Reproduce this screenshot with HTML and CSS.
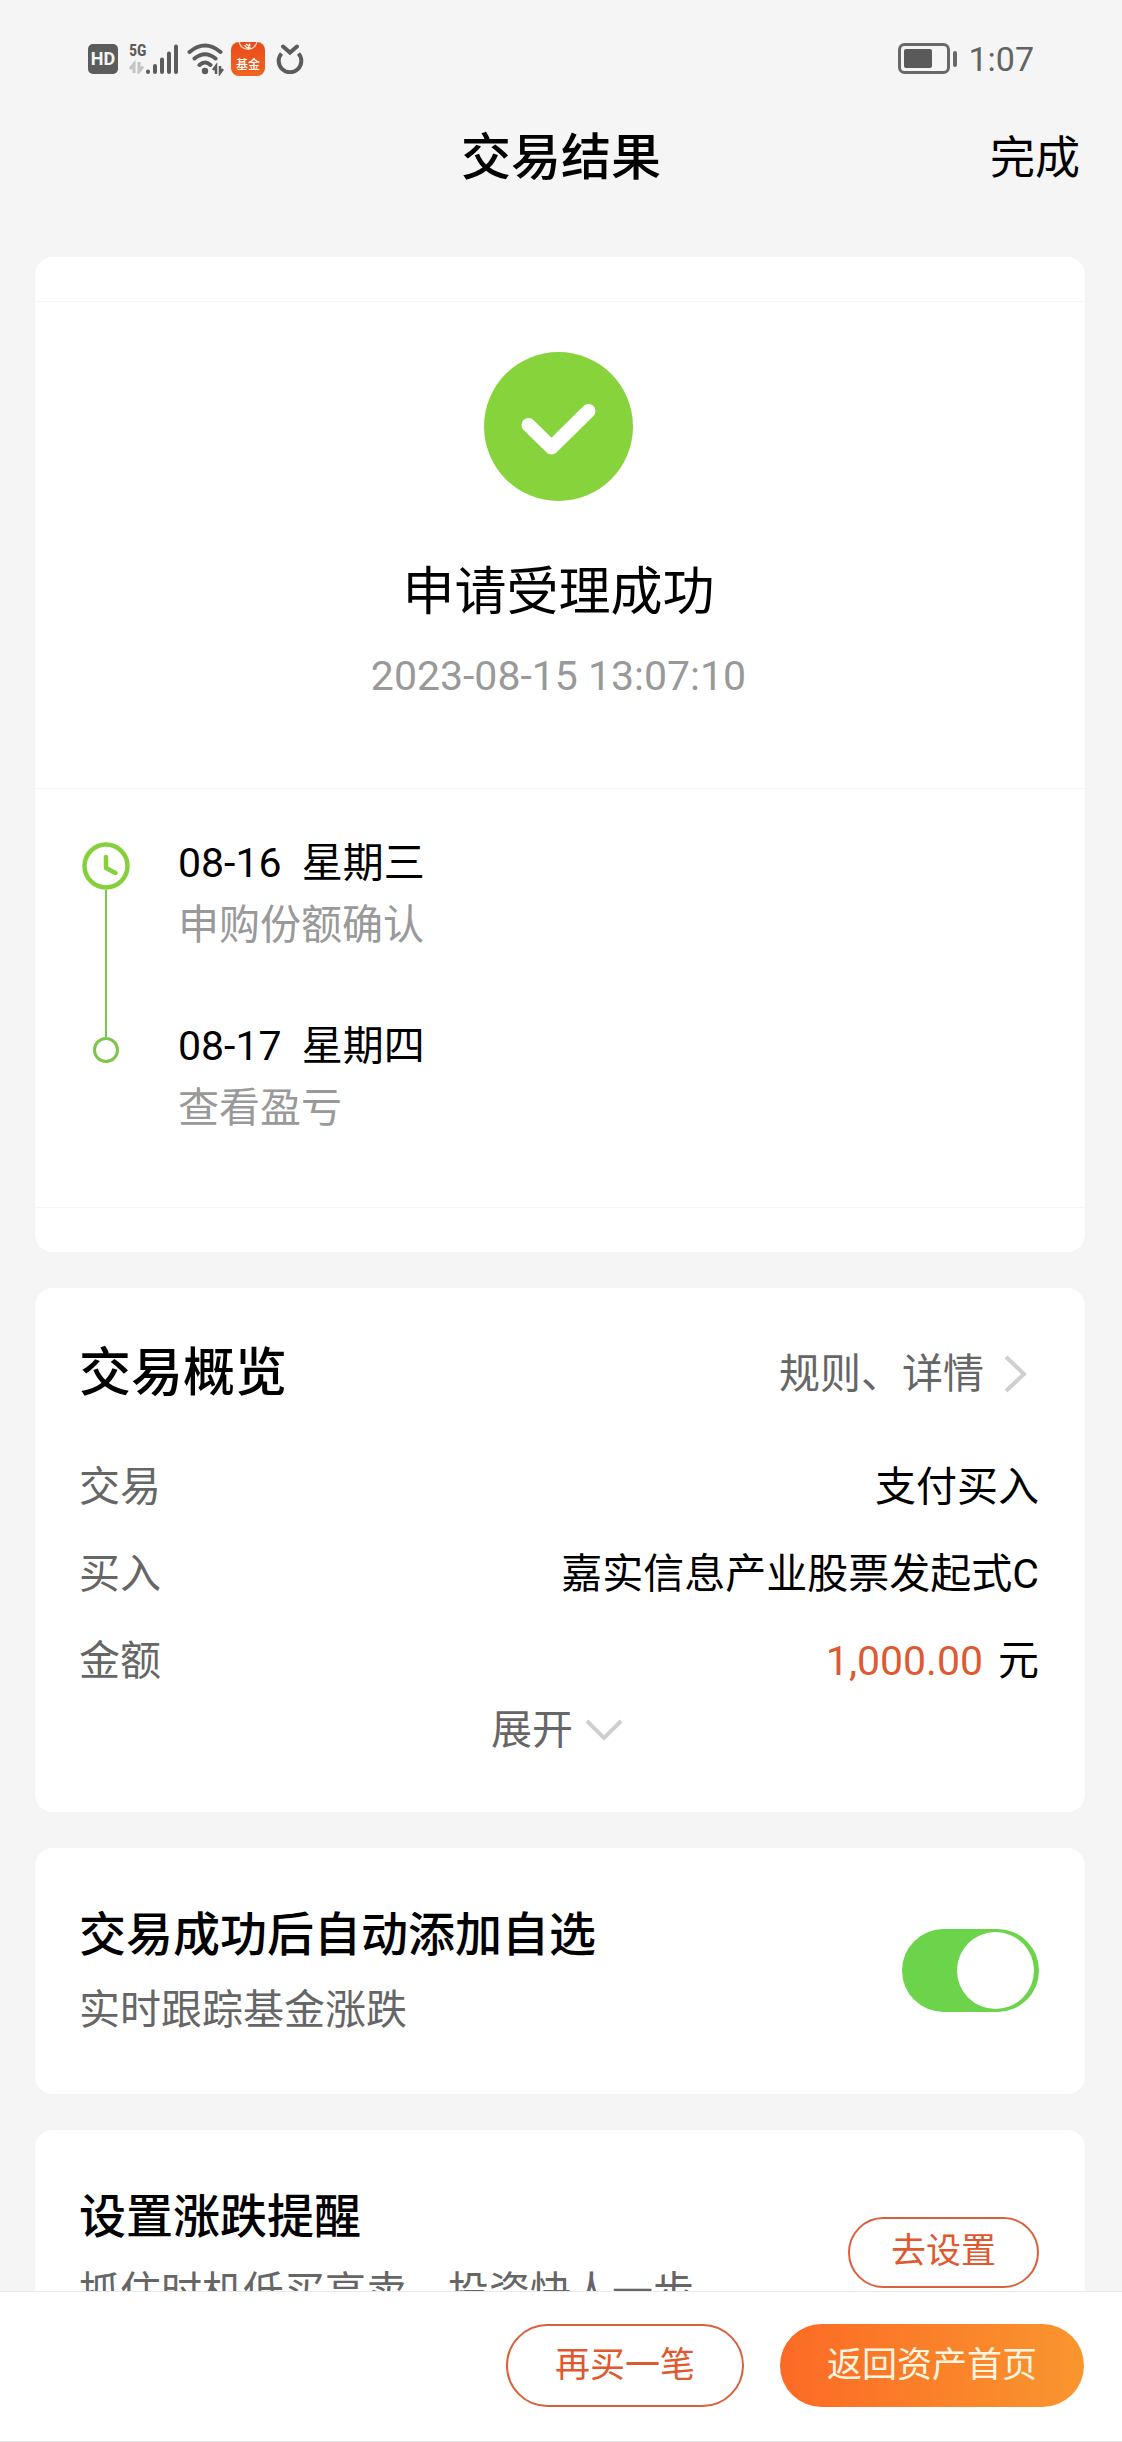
FILE: index.html
```html
<!DOCTYPE html>
<html lang="zh-CN">
<head>
<meta charset="utf-8">
<meta name="viewport" content="width=device-width, initial-scale=1">
<title>交易结果</title>
<link rel="stylesheet" href="styles.css">
</head>
<body>
<div class="app">
  <div class="status">
    <div class="status-left">
      <span class="hd">HD</span>
      <span class="network">
        <span class="network-type">5G</span>
        <svg width="16" height="14" viewBox="0 0 16 14" aria-hidden="true"><path d="M5 13V4L1 9M10 2v9.500l4-5" fill="none" stroke="#c4c4c4" stroke-width="3"/></svg>
      </span>
      <svg class="ic-signal" width="34" height="34" viewBox="16 0 34 34" aria-hidden="true">
        <g stroke="#5c5c5c" stroke-width="4" stroke-linecap="round"><path d="M19 29.500v0.500M26 24v6M33 17.500V30M40 11.500V30M47 4.500V30"/></g>
      </svg>
      <svg class="ic-wifi" width="38" height="34" viewBox="0 0 38 34" role="img" aria-label="Wi-Fi">
        <g fill="none" stroke="#5c5c5c" stroke-width="4" stroke-linecap="round"><path d="M2.500 10Q18 -3 33.500 10M7.500 16.500Q18 8 28.500 16.500M12.500 23Q18 18 23.500 23"/></g>
        <circle cx="18" cy="29" r="3.200" fill="#5c5c5c"/><path d="M29 32v-8l-3 4M33 24v7l3-4" fill="none" stroke="#5c5c5c" stroke-width="2.500"/>
      </svg>
      <span class="fund"><svg width="34" height="14" viewBox="0 0 34 14" aria-hidden="true"><path d="M8 0a9.500 10.500 0 0 0 18 0" fill="none" stroke="#ffd9c4" stroke-width="1.200"/><path d="M13.500 3q2 4 6.500 3M15 2q2 2 4.500 1.500M17 7.500l2-6" fill="none" stroke="#fff" stroke-width="1.200"/></svg>基金</span>
      <svg class="ic-ring" width="28" height="30" viewBox="0 0 28 30" aria-hidden="true"><path d="M5.500 9.500a11.300 11.300 0 1 0 17 0" fill="none" stroke="#5c5c5c" stroke-width="4"/><path d="M7 2.500l7 6 7-6" fill="none" stroke="#5c5c5c" stroke-width="4" stroke-linecap="round"/></svg>
    </div>
    <div class="status-right">
      <svg width="60" height="32" viewBox="0 0 60 32" role="img" aria-label="电量"><rect x="1.500" y="1.500" width="49" height="28" rx="5" fill="none" stroke="#686868" stroke-width="3"/><rect x="6" y="6" width="28" height="19" rx="2" fill="#5a5a5a"/><rect x="55" y="8" width="4" height="16" rx="2" fill="#686868"/></svg>
      <span>1:07</span>
    </div>
  </div>

  <header class="nav">
    <h1>交易结果</h1>
    <button type="button" class="done">完成</button>
  </header>

  <main class="content">
    <section class="card result">
      <div class="summary">
        <svg width="149" height="149" viewBox="0 0 149 149" aria-hidden="true"><circle cx="74.500" cy="74.500" r="74.500" fill="#87d33c"/><path d="M44.500 73L67.500 95.500L104.500 59" fill="none" stroke="#fff" stroke-width="14" stroke-linecap="round" stroke-linejoin="round"/></svg>
        <h2>申请受理成功</h2>
        <time datetime="2023-08-15T13:07:10">2023-08-15 13:07:10</time>
      </div>
      <ol class="steps">
        <li class="step">
          <span class="marker marker-clock"><svg width="48" height="48" viewBox="0 0 48 48" aria-hidden="true"><circle cx="24" cy="24" r="21.500" fill="none" stroke="#86d03c" stroke-width="4.500"/><path d="M24 15v11l9.500 5" fill="none" stroke="#86d03c" stroke-width="4.500" stroke-linecap="round" stroke-linejoin="round"/></svg></span>
          <div><p class="step-date">08-16&nbsp; 星期三</p><p class="step-note">申购份额确认</p></div>
        </li>
        <li class="step">
          <span class="marker marker-dot"></span>
          <div><p class="step-date">08-17&nbsp; 星期四</p><p class="step-note">查看盈亏</p></div>
        </li>
      </ol>
    </section>

    <section class="card overview">
      <div class="overview-head">
        <h2>交易概览</h2>
        <a href="#rules">规则、详情<svg width="24" height="38" viewBox="0 0 24 38" aria-hidden="true"><path d="M2 2l18 17L2 36" fill="none" stroke="#cfcfcf" stroke-width="4"/></svg></a>
      </div>
      <dl>
        <div class="row"><dt>交易</dt><dd>支付买入</dd></div>
        <div class="row"><dt>买入</dt><dd>嘉实信息产业股票发起式C</dd></div>
        <div class="row"><dt>金额</dt><dd><span class="amount">1,000.00</span>元</dd></div>
      </dl>
      <button type="button" class="expand">展开<svg width="38" height="22" viewBox="0 0 38 22" aria-hidden="true"><path d="M2 2l17 17L36 2" fill="none" stroke="#cfcfcf" stroke-width="4"/></svg></button>
    </section>

    <section class="card option">
      <label for="auto-add"><strong>交易成功后自动添加自选</strong><span>实时跟踪基金涨跌</span></label>
      <input type="checkbox" role="switch" id="auto-add" class="switch" checked>
    </section>

    <section class="card option">
      <div class="option-text"><strong>设置涨跌提醒</strong><span>抓住时机低买高卖，投资快人一步</span></div>
      <button type="button" class="pill pill-small">去设置</button>
    </section>
  </main>

  <footer class="actions">
    <button type="button" class="pill">再买一笔</button>
    <button type="button" class="pill pill-primary">返回资产首页</button>
  </footer>
</div>
</body>
</html>
```
FILE: styles.css
```css
*,
*::before,
*::after {
  box-sizing: border-box;
  margin: 0;
  padding: 0;
}

body {
  background: #f5f5f5;
  color: #000;
  font-family: Roboto, "Noto Sans CJK SC", sans-serif;
  font-size: 41px;
}

button {
  border: 0;
  background: none;
  font: inherit;
  color: inherit;
  cursor: pointer;
}

svg {
  display: block;
  flex: none;
}

.app {
  display: flex;
  flex-direction: column;
  height: 100vh;
}

/* Status bar */
.status {
  display: flex;
  flex: none;
  justify-content: space-between;
  align-items: center;
  height: 118px;
  padding: 0 88px;
  color: #636363;
}

.status-left {
  display: flex;
  align-items: center;
}

.hd {
  width: 30px;
  height: 30px;
  border-radius: 5px;
  background: #5c5c5c;
  color: #f5f5f5;
  font-size: 18px;
  font-weight: 700;
  line-height: 30px;
  text-align: center;
}

.network {
  display: flex;
  flex-direction: column;
  width: 16px;
  height: 34px;
  margin-left: 11px;
}

.network-type {
  color: #5c5c5c;
  font-family: "Roboto Condensed", Roboto, sans-serif;
  font-size: 16px;
  font-weight: 700;
  line-height: 18px;
  white-space: nowrap;
}

.ic-wifi {
  margin-left: 8px;
}

.fund {
  display: flex;
  flex-direction: column;
  align-items: center;
  width: 34px;
  height: 34px;
  margin-left: 6px;
  border-radius: 8px;
  background: linear-gradient(#ea4a1c, #f0641e);
  color: #fff;
  font-size: 12px;
  font-weight: 500;
  line-height: 18px;
}

.ic-ring {
  margin-left: 11px;
}

.status-right {
  display: flex;
  align-items: center;
  gap: 10px;
  font-size: 34px;
  line-height: 40px;
}

/* Title bar */
.nav {
  display: grid;
  flex: none;
  grid-template-columns: 1fr auto 1fr;
  align-items: center;
  height: 80px;
  padding: 0 42px;
}

.nav h1 {
  grid-column: 2;
  font-size: 50px;
  font-weight: 500;
  line-height: 60px;
}

.done {
  justify-self: end;
  padding-top: 2px;
  font-size: 45px;
  line-height: 60px;
}

/* Cards */
.content {
  display: flex;
  flex: 1;
  flex-direction: column;
  gap: 36px;
  min-height: 0;
  padding: 59px 37px 36px 35px;
  overflow-y: auto;
  scrollbar-width: none;
}

.card {
  flex: none;
  border-radius: 18px;
  background: #fff;
}

.card h2 {
  font-size: 52px;
  line-height: 60px;
}

.result {
  padding: 44px 0;
}

.summary {
  display: flex;
  flex-direction: column;
  align-items: center;
  padding: 50px 3px 87px 0;
  border-top: 1px solid #f5f5f5;
}

.summary h2 {
  margin: 62px 0 28px;
  font-weight: 400;
}

.summary time {
  color: #999;
  line-height: 50px;
}

.steps {
  padding: 43px 46px 68px;
  border: solid #f5f5f5;
  border-width: 1px 0;
  list-style: none;
}

.step {
  display: flex;
  gap: 47px;
  line-height: 62px;
}

.step:first-child > div {
  padding-bottom: 59px;
}

.step-note {
  color: #999;
}

.marker {
  display: flex;
  flex-direction: column;
  align-items: center;
  width: 50px;
}

.marker-clock {
  padding-top: 10px;
}

.marker-clock::after {
  flex: 1;
  width: 2px;
  background: #7dc64b;
  content: "";
}

.marker-dot::before {
  width: 2px;
  height: 22px;
  background: #7dc64b;
  content: "";
}

.marker-dot::after {
  width: 26px;
  height: 26px;
  border: 3px solid #7dc64b;
  border-radius: 50%;
  content: "";
}

.overview {
  padding: 56px 46px 57px 44px;
}

.overview-head {
  display: flex;
  justify-content: space-between;
  align-items: center;
  margin-bottom: 40px;
}

.overview-head h2 {
  font-weight: 500;
}

.overview-head a {
  display: flex;
  align-items: center;
  gap: 20px;
  padding-right: 11px;
  color: #666;
  line-height: 60px;
  text-decoration: none;
}

.row {
  display: flex;
  justify-content: space-between;
  line-height: 87px;
}

.row dt {
  color: #666;
}

.amount {
  margin-right: 15px;
  color: #dd5a32;
}

.expand {
  display: flex;
  align-items: center;
  gap: 12px;
  margin: 0 auto;
  padding-right: 4px;
  color: #666;
  line-height: 50px;
}

.option {
  display: flex;
  justify-content: space-between;
  align-items: center;
  padding: 52px 46px 54px 44px;
}

.option label,
.option-text {
  display: flex;
  flex-direction: column;
  gap: 10px;
}

.option strong {
  font-size: 47px;
  font-weight: 500;
  line-height: 70px;
}

.option span {
  color: #666;
  line-height: 60px;
}

.switch {
  display: flex;
  align-items: center;
  justify-content: flex-end;
  width: 137px;
  height: 83px;
  padding: 0 5px;
  border-radius: 42px;
  background: #6bd44b;
  appearance: none;
}

.switch::before {
  width: 77px;
  height: 77px;
  border-radius: 50%;
  background: #fff;
  content: "";
}

.switch:not(:checked) {
  justify-content: flex-start;
  background: #ccc;
}

/* Buttons */
.pill {
  height: 83px;
  padding: 0 47px;
  border: 2px solid #d9603c;
  border-radius: 42px;
  color: #e0582d;
  font-size: 35px;
  line-height: 50px;
}

.pill-small {
  height: 71px;
  padding: 0 41px;
}

.pill-primary {
  border-width: 0;
  background: linear-gradient(90deg, #fc6a25, #f9962e);
  color: #fff6e0;
}

.actions {
  display: flex;
  flex: none;
  justify-content: flex-end;
  gap: 36px;
  padding: 32px 38px 34px;
  border: solid #e9e9e9;
  border-width: 1px 0;
  background: #fff;
}
```
